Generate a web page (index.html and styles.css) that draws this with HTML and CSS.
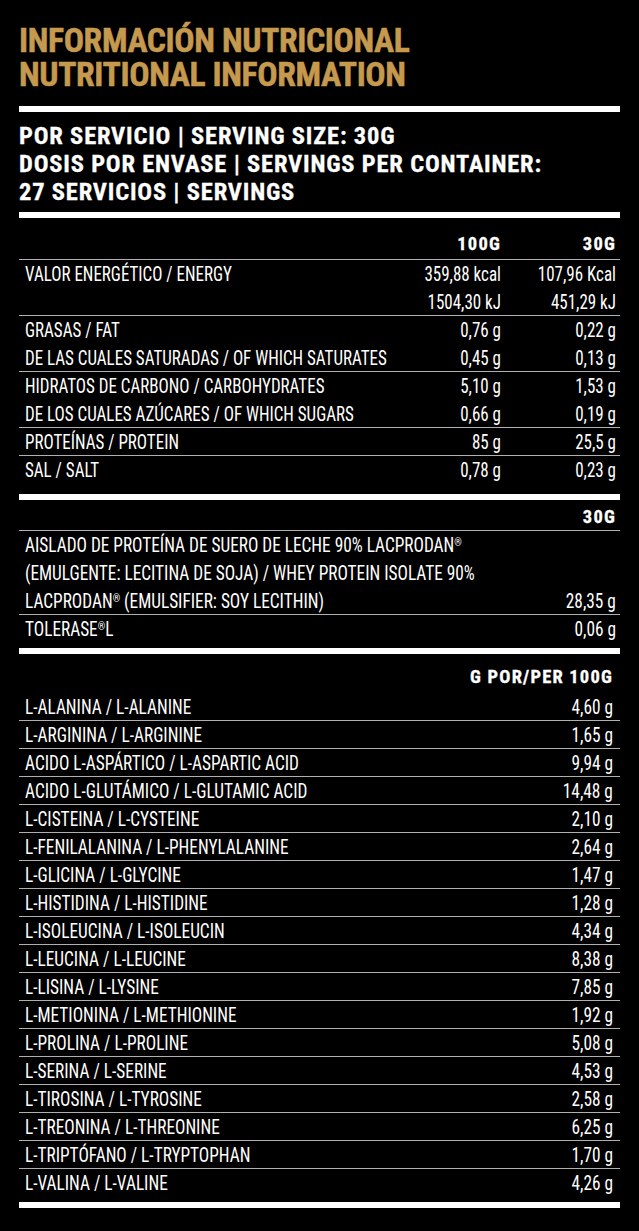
FILE: index.html
```html
<!DOCTYPE html>
<html lang="es">
<head>
<meta charset="utf-8">
<title>Información nutricional</title>
<link rel="stylesheet" href="styles.css">
</head>
<body>
<div class="page">
  <h1 class="title"><span class="tl">INFORMACIÓN NUTRICIONAL</span><span class="tl">NUTRITIONAL INFORMATION</span></h1>
  <div class="bar bar-1"></div>
  <p class="serving">POR SERVICIO | SERVING SIZE: 30G<br>DOSIS POR ENVASE | SERVINGS PER CONTAINER:<br>27 SERVICIOS | SERVINGS</p>
  <div class="bar bar-2"></div>

  <section class="nutri">
    <div class="row head head-1 sep"><span></span><span class="v">100G</span><span class="v">30G</span></div>
    <div class="row"><span>VALOR ENERGÉTICO / ENERGY</span><span class="v">359,88 kcal</span><span class="v">107,96 Kcal</span></div>
    <div class="row sep"><span></span><span class="v">1504,30 kJ</span><span class="v">451,29 kJ</span></div>
    <div class="row"><span>GRASAS / FAT</span><span class="v">0,76 g</span><span class="v">0,22 g</span></div>
    <div class="row sep"><span>DE LAS CUALES SATURADAS / OF WHICH SATURATES</span><span class="v">0,45 g</span><span class="v">0,13 g</span></div>
    <div class="row"><span>HIDRATOS DE CARBONO / CARBOHYDRATES</span><span class="v">5,10 g</span><span class="v">1,53 g</span></div>
    <div class="row sep"><span>DE LOS CUALES AZÚCARES / OF WHICH SUGARS</span><span class="v">0,66 g</span><span class="v">0,19 g</span></div>
    <div class="row sep"><span>PROTEÍNAS / PROTEIN</span><span class="v">85 g</span><span class="v">25,5 g</span></div>
    <div class="row"><span>SAL / SALT</span><span class="v">0,78 g</span><span class="v">0,23 g</span></div>
  </section>
  <div class="bar bar-3"></div>

  <section class="ingr">
    <div class="line head head-2 sep"><span></span><span class="v">30G</span></div>
    <div class="line multi sep"><span>AISLADO DE PROTEÍNA DE SUERO DE LECHE 90% LACPRODAN<sup class="reg">®</sup><br>(EMULGENTE: LECITINA DE SOJA) / WHEY PROTEIN ISOLATE 90%<br>LACPRODAN<sup class="reg">®</sup> (EMULSIFIER: SOY LECITHIN)</span><span class="v">28,35 g</span></div>
    <div class="line"><span>TOLERASE<sup class="reg">®</sup>L</span><span class="v">0,06 g</span></div>
  </section>
  <div class="bar bar-4"></div>

  <section class="amino">
    <div class="line head head-3"><span></span><span class="v">G POR/PER 100G</span></div>
    <div class="line sep"><span>L-ALANINA / L-ALANINE</span><span class="v">4,60 g</span></div>
    <div class="line sep"><span>L-ARGININA / L-ARGININE</span><span class="v">1,65 g</span></div>
    <div class="line sep"><span>ACIDO L-ASPÁRTICO / L-ASPARTIC ACID</span><span class="v">9,94 g</span></div>
    <div class="line sep"><span>ACIDO L-GLUTÁMICO / L-GLUTAMIC ACID</span><span class="v">14,48 g</span></div>
    <div class="line sep"><span>L-CISTEINA / L-CYSTEINE</span><span class="v">2,10 g</span></div>
    <div class="line sep"><span>L-FENILALANINA / L-PHENYLALANINE</span><span class="v">2,64 g</span></div>
    <div class="line sep"><span>L-GLICINA / L-GLYCINE</span><span class="v">1,47 g</span></div>
    <div class="line sep"><span>L-HISTIDINA / L-HISTIDINE</span><span class="v">1,28 g</span></div>
    <div class="line sep"><span>L-ISOLEUCINA / L-ISOLEUCIN</span><span class="v">4,34 g</span></div>
    <div class="line sep"><span>L-LEUCINA / L-LEUCINE</span><span class="v">8,38 g</span></div>
    <div class="line sep"><span>L-LISINA / L-LYSINE</span><span class="v">7,85 g</span></div>
    <div class="line sep"><span>L-METIONINA / L-METHIONINE</span><span class="v">1,92 g</span></div>
    <div class="line sep"><span>L-PROLINA / L-PROLINE</span><span class="v">5,08 g</span></div>
    <div class="line sep"><span>L-SERINA / L-SERINE</span><span class="v">4,53 g</span></div>
    <div class="line sep"><span>L-TIROSINA / L-TYROSINE</span><span class="v">2,58 g</span></div>
    <div class="line sep"><span>L-TREONINA / L-THREONINE</span><span class="v">6,25 g</span></div>
    <div class="line sep"><span>L-TRIPTÓFANO / L-TRYPTOPHAN</span><span class="v">1,70 g</span></div>
    <div class="line"><span>L-VALINA / L-VALINE</span><span class="v">4,26 g</span></div>
  </section>
  <div class="bar bar-5"></div>
</div>
</body>
</html>
```
FILE: styles.css
```css
html { background: #000; }
body {
  margin: 0;
  background: #000;
  color: #fff;
  font-family: "Roboto Condensed", "Liberation Sans", sans-serif;
  font-weight: 400;
  font-size: 20px;
}
.page {
  width: 601px;
  margin-left: 19px;
  min-height: 1231px;
}
.title {
  margin: 0;
  padding-top: 24px;
  color: #c69a4e;
  font-weight: 700;
  font-size: 33.75px;
  line-height: 34px;
  letter-spacing: -0.4px;
  white-space: nowrap;
  -webkit-text-stroke: 0.5px #c69a4e;
}
.tl {
  display: block;
  height: 34px;
}
.bar {
  height: 6px;
  background: #fff;
}
.bar-1 { margin-top: 14px; }
.bar-2 { margin-top: 6px; }
.bar-3 { margin-top: 10px; }
.bar-4 { margin-top: 5px; }
.bar-5 { margin-top: 5px; }
.serving {
  margin: 0;
  padding-top: 10px;
  font-weight: 700;
  font-size: 24.5px;
  line-height: 28px;
  letter-spacing: 0.8px;
  white-space: nowrap;
  -webkit-text-stroke: 0.3px #fff;
}
.row, .line {
  height: 28px;
  line-height: 28px;
  white-space: nowrap;
}
.row {
  display: grid;
  grid-template-columns: minmax(0, 1fr) 120px 115px;
  padding: 0 4px 0 6px;
}
.line {
  display: flex;
  justify-content: space-between;
  padding: 0 4px 0 6px;
}
.row > span, .line > span {
  display: block;
  transform: scaleX(0.85);
  transform-origin: 0 50%;
}
.line > span { transform: scaleX(0.865); }
.row > .v, .line > .v {
  text-align: right;
  transform-origin: 100% 50%;
}
.amino .line { padding-right: 7px; }
.sep { box-shadow: inset 0 -1px 0 #b0b0b0; }
.head {
  font-weight: 700;
  font-size: 18.5px;
  letter-spacing: 1.2px;
  height: auto;
  -webkit-text-stroke: 0.3px #fff;
}
.head > span, .head > .v { transform: none; }
.head-1 { padding-top: 12px; padding-bottom: 2px; }
.head-2 { padding-top: 3px; }
.head-3 { padding-top: 9px; padding-bottom: 2px; }
.multi {
  height: 84px;
  align-items: flex-end;
}
.reg {
  font-size: 0.55em;
  line-height: 0;
  vertical-align: 0.55em;
}
```
